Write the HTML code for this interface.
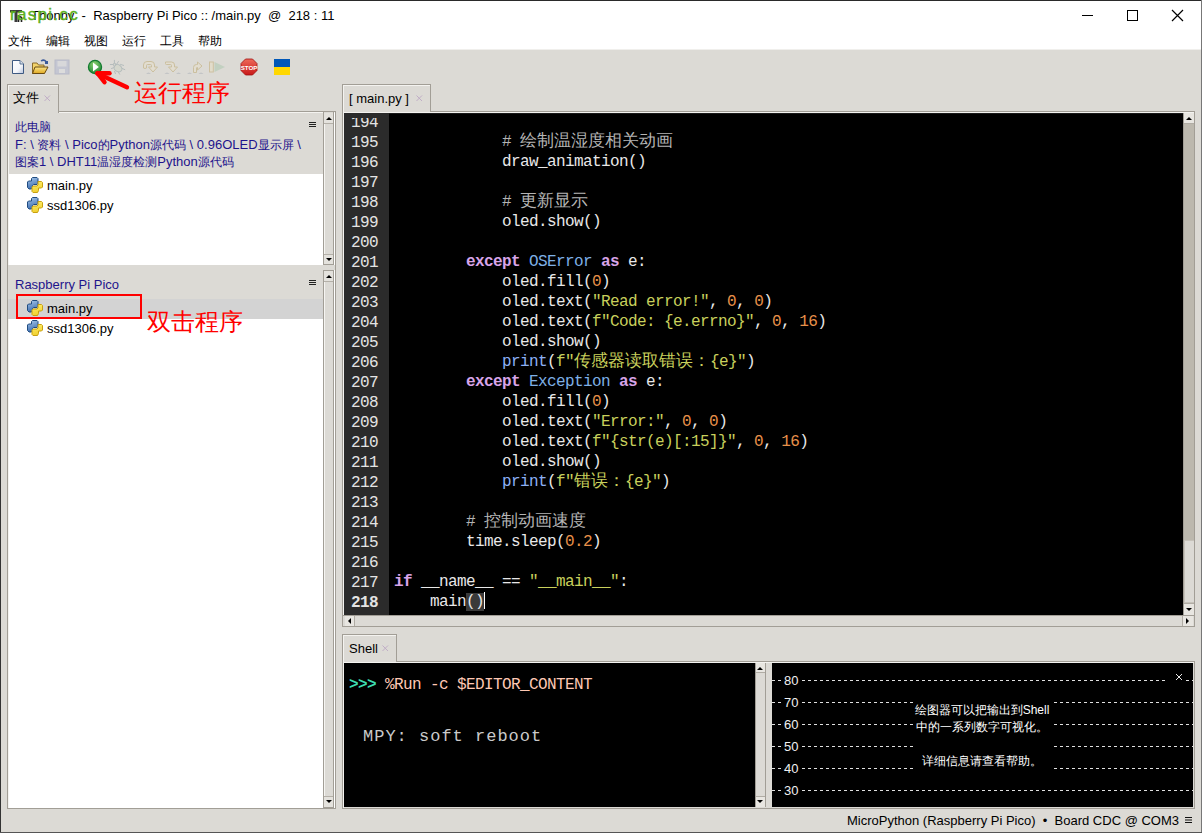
<!DOCTYPE html>
<html><head><meta charset="utf-8">
<style>
*{margin:0;padding:0;box-sizing:border-box}
html,body{width:1202px;height:833px;overflow:hidden;background:#dcdad5;font-family:"Liberation Sans",sans-serif;font-size:12px;color:#000}
.a{position:absolute}
.t{position:absolute;white-space:pre;line-height:1}
.code{font-family:"Liberation Mono",monospace;font-size:16px;letter-spacing:-0.6px;line-height:20px;white-space:pre;color:#e8e8e8}
.k{color:#d8a4e8;font-weight:bold}
.c{color:#b4b4b4}
.s{color:#c8d05c}
.n{color:#e8904a}
.cl{color:#7eb0e6}
.b{color:#8cb0f4}
.cj{font-size:17px;letter-spacing:0}
.ln{position:absolute;left:0;width:45px;font-family:"Liberation Mono",monospace;font-size:16px;letter-spacing:-0.6px;line-height:20px;white-space:pre;color:#e4e4e4;padding-left:7px}
.bd{border:1px solid #a6a39b}
.sbv{position:absolute;width:11px;background:#dcdad5;border-left:1px solid #a6a39b}
.btn{position:absolute;width:10px;height:10px;background:#e4e2dd;border:1px solid #cfccc5}
.tri-u{position:absolute;left:2px;top:3px;width:0;height:0;border-left:3px solid transparent;border-right:3px solid transparent;border-bottom:3px solid #000}
.tri-d{position:absolute;left:2px;top:3px;width:0;height:0;border-left:3px solid transparent;border-right:3px solid transparent;border-top:3px solid #000}
</style></head><body>
<!-- window frame -->
<div class="a" style="left:0;top:0;width:1202px;height:50px;background:#fff"></div>
<div class="a" style="left:0;top:0;width:1202px;height:1px;background:#2a2a2a"></div>
<div class="a" style="left:0;top:0;width:1px;height:833px;background:#333"></div>
<div class="a" style="left:1201px;top:0;width:1px;height:833px;background:#777"></div>
<div class="a" style="left:1px;top:49px;width:1200px;height:1px;background:#f0efec"></div>

<!-- title -->
<svg class="a" style="left:9px;top:8px" width="16" height="16"><path d="M1 2 H13 V4.5 H8.5 V14 H5.5 V4.5 H1 Z" fill="#3a3a3a"/><path d="M9.5 7 V14 M12.5 9 V14 M9.5 9.5 Q11 8 12.5 9.5" stroke="#222" stroke-width="1.6" fill="none"/></svg>
<div class="t" style="left:31px;top:9px;font-size:13px;color:#000">Thonny  -  Raspberry Pi Pico :: /main.py  @  218 : 11</div>
<div class="t" style="left:10px;top:6px;font-size:17px;color:#5cb01c;letter-spacing:1.3px;-webkit-text-stroke:0.4px #5cb01c">raspi.cc</div>
<!-- window controls -->
<div class="a" style="left:1082px;top:15px;width:11px;height:1px;background:#000"></div>
<div class="a" style="left:1127px;top:10px;width:11px;height:11px;border:1px solid #000"></div>
<svg class="a" style="left:1171px;top:9px" width="13" height="13"><path d="M1 1 L12 12 M12 1 L1 12" stroke="#000" stroke-width="1.2"/></svg>

<!-- menu -->
<div class="t" style="left:8px;top:35px;font-size:12px">文件</div>
<div class="t" style="left:46px;top:35px;font-size:12px">编辑</div>
<div class="t" style="left:84px;top:35px;font-size:12px">视图</div>
<div class="t" style="left:122px;top:35px;font-size:12px">运行</div>
<div class="t" style="left:160px;top:35px;font-size:12px">工具</div>
<div class="t" style="left:198px;top:35px;font-size:12px">帮助</div>


<!-- toolbar -->
<svg class="a" style="left:0;top:50px" width="300" height="50" viewBox="0 50 300 50">
 <defs>
  <linearGradient id="pg" x1="0" y1="0" x2="1" y2="1"><stop offset="0" stop-color="#fff"/><stop offset="0.6" stop-color="#f4f6fa"/><stop offset="1" stop-color="#b8c4dc"/></linearGradient>
  <linearGradient id="fg" x1="0" y1="0" x2="0" y2="1"><stop offset="0" stop-color="#fbe58a"/><stop offset="1" stop-color="#e0a820"/></linearGradient>
  <radialGradient id="gg" cx="0.45" cy="0.3" r="0.7"><stop offset="0" stop-color="#8fd070"/><stop offset="1" stop-color="#1f8a38"/></radialGradient>
  <linearGradient id="rg" x1="0" y1="0" x2="0" y2="1"><stop offset="0" stop-color="#ee6a5a"/><stop offset="1" stop-color="#c81818"/></linearGradient>
 </defs>
 <!-- new -->
 <path d="M12.5 60.5 H20 L23.5 64 V73.5 H12.5 Z" fill="url(#pg)" stroke="#3e5a82" stroke-width="1"/>
 <path d="M20 60.5 V64 H23.5" fill="#dde4f0" stroke="#3e5a82" stroke-width="0.8"/>
 <!-- open -->
 <path d="M32.5 63 H37 L38.5 65 H44 V73.5 H32.5 Z" fill="#f2d36a" stroke="#8a6a2a" stroke-width="1"/>
 <path d="M35 67 H48 L44.5 73.5 H32.5 Z" fill="url(#fg)" stroke="#6a4a10" stroke-width="1"/>
 <path d="M41 61 Q44 59 46 61.5" fill="none" stroke="#3a5a9a" stroke-width="1.5"/>
 <rect x="45" y="61" width="3" height="3" fill="#3a5a9a"/>
 <!-- save disabled -->
 <rect x="55" y="60" width="14" height="14" fill="#c4c6d2" stroke="#b8bac8"/>
 <rect x="57.5" y="61" width="9" height="5.5" fill="#d8d8da"/>
 <rect x="59" y="69" width="6" height="4" fill="#dcdcdc"/>
 <!-- run -->
 <circle cx="95" cy="67" r="6.6" fill="url(#gg)" stroke="#137a30" stroke-width="1.2"/>
 <path d="M93 62.5 L98.8 67 L93 71.5 Z" fill="#fff"/>
 <!-- debug disabled -->
 <g stroke="#b4bcbc" stroke-width="1" fill="none" stroke-linecap="round">
  <ellipse cx="118" cy="68.2" rx="4.2" ry="3.4" fill="#d4d6cc" transform="rotate(38 118 68.2)"/>
  <circle cx="114.6" cy="64.6" r="1.4" fill="#d4d6cc"/>
  <path d="M114.4 60.3 V63.2 M118.4 61.5 L116.8 64 M110.3 64.5 H113.2 M111.5 68.5 L114 67.6 M120.5 64.4 L123.6 65.4 M122 68.4 L124.8 69.6 M114.6 71.4 L115.4 73.6 M118.4 72 L119.6 74.2"/>
 </g>
 <!-- step over -->
 <g fill="#e2ddd0" stroke="#cbbf9f" stroke-width="1" stroke-linejoin="round">
  <path d="M143.5 68 V65 Q143.5 61.5 147 61.5 H151 Q154.5 61.5 154.5 65 V67 H157.5 L153 72 L148.5 67 H151.5 V65.5 Q151.5 64.5 150.5 64.5 H147.5 Q146.5 64.5 146.5 65.5 V68 Q145 69 143.5 68 Z"/>
 </g>
 <g fill="#a9afb8"><path d="M146 73.5 Q148.5 71.8 151 73.5 Z"/></g>
 <g fill="#e2ddd0" stroke="#cbbf9f" stroke-width="1" stroke-linejoin="round">
  <path d="M165.5 62 H171.5 Q174.5 62 174.5 65 V67 H177.5 L173 72 L168.5 67 H171.5 V65.5 Q171.5 64.5 170.5 64.5 H166.5 Q165.5 64.5 165.5 63.5 Z"/>
 </g>
 <g fill="#a9afb8"><path d="M164.5 73.5 Q167 71.8 169.5 73.5 Z M176 73.5 Q178.5 71.8 181 73.5 Z"/></g>
 <g fill="#e2ddd0" stroke="#cbbf9f" stroke-width="1" stroke-linejoin="round">
  <path d="M193.5 72.5 V67.5 Q193.5 64.5 196.5 64.5 H197.5 V62 L202 66 L197.5 70 V67.5 H197 Q196.5 67.5 196.5 68 V72.5 Z"/>
 </g>
 <g fill="#a9afb8"><path d="M187 73.5 Q189.5 71.8 192 73.5 Z M198.5 73.5 Q201 71.8 203.5 73.5 Z"/></g>
 <rect x="209.5" y="62" width="3.8" height="10" fill="#e2dccb" stroke="#cdc0a0" stroke-width="1"/>
 <path d="M214.5 62 L225 67 L214.5 72 Z" fill="#c2d0c0"/>
 <!-- stop -->
 <path d="M245.5 59 H252.5 L257 63.5 V70.5 L252.5 75 H245.5 L241 70.5 V63.5 Z" fill="url(#rg)" stroke="#a01010" stroke-width="0.8"/>
 <text x="249" y="69.6" font-family="Liberation Sans" font-weight="bold" font-size="6.2" fill="#fff" text-anchor="middle">STOP</text>
 <!-- flag -->
 <rect x="274" y="59" width="16" height="8" fill="#0057b8"/>
 <rect x="274" y="67" width="16" height="8" fill="#ffd700"/>
 <!-- arrow -->
 <g stroke="#ff0000" stroke-width="4.4" stroke-linecap="round" stroke-linejoin="round" fill="none">
  <path d="M97.5 73.5 L127 87.2"/>
  <path d="M97.5 73.2 L109.5 73.2"/>
  <path d="M97.5 73.2 L104.5 82.2"/>
 </g>
</svg>
<div class="t" style="left:134px;top:81px;font-size:24px;color:#ff0000">运行程序</div>

<!-- LEFT PANEL -->
<div class="a" style="left:7px;top:111px;width:329px;height:698px;border:1px solid #a29e96;background:#fff"><div class="a" style="left:0;top:0;width:327px;height:696px;border-left:1px solid #f4f3f0;border-top:1px solid #f4f3f0"></div></div><div class="a" style="left:7px;top:84px;width:52px;height:29px;background:#dcdad5;border:1px solid #a29e96;border-bottom:none"><div class="a" style="left:0;top:0;width:50px;height:28px;border-left:1px solid #f4f3f0;border-top:1px solid #f4f3f0"></div></div>
<div class="t" style="left:13px;top:92px;font-size:12.5px">文件</div>
<svg class="a" style="left:44px;top:95px" width="7" height="7"><path d="M0.5 0.5 L6 6 M6 0.5 L0.5 6" stroke="#bca8c4" stroke-width="0.9"/></svg>
<!-- upper header -->
<div class="a" style="left:9px;top:113px;width:314px;height:61px;background:#dcdad5"></div>
<div class="t" style="left:15px;top:121px;font-size:12px;color:#1e148c">此电脑</div>
<div class="t" style="left:15px;top:138px;font-size:13px;color:#1e148c">F: \ <span style="font-size:12px">资料</span> \ Pico<span style="font-size:12px">的</span>Python<span style="font-size:12px">源代码</span> \ 0.96OLED<span style="font-size:12px">显示屏</span> \</div>
<div class="t" style="left:15px;top:155px;font-size:13px;color:#1e148c"><span style="font-size:12px">图案</span>1 \ DHT11<span style="font-size:12px">温湿度检测</span>Python<span style="font-size:12px">源代码</span></div>
<svg class="a" style="left:309px;top:121px" width="8" height="7"><path d="M0 1.5H7M0 3.5H7M0 5.5H7" stroke="#222" stroke-width="1"/></svg>
<!-- upper list -->
<div class="t" style="left:47px;top:179px;font-size:13px">main.py</div>
<div class="t" style="left:47px;top:199px;font-size:13px">ssd1306.py</div>
<!-- lower header -->
<div class="a" style="left:8px;top:265px;width:315px;height:34px;background:#dcdad5"></div>
<div class="t" style="left:15px;top:278px;font-size:13px;color:#1e148c">Raspberry Pi Pico</div>
<svg class="a" style="left:309px;top:279px" width="8" height="7"><path d="M0 1.5H7M0 3.5H7M0 5.5H7" stroke="#222" stroke-width="1"/></svg>
<div class="a" style="left:8px;top:299px;width:315px;height:20px;background:#d3d3d3"></div>
<div class="a" style="left:16px;top:294px;width:126px;height:25px;border:2px solid #ff0000"></div>
<div class="t" style="left:47px;top:302px;font-size:13px">main.py</div>
<div class="t" style="left:47px;top:322px;font-size:13px">ssd1306.py</div>
<div class="t" style="left:147px;top:310px;font-size:24px;color:#ff0000">双击程序</div>
<!-- python icons -->
<svg class="a" style="left:0;top:0" width="60" height="340">
 <defs>
  <g id="py">
   <linearGradient id="pyb" x1="0" y1="0" x2="0.3" y2="1"><stop offset="0" stop-color="#a8c8ec"/><stop offset="1" stop-color="#3f6fb0"/></linearGradient>
   <linearGradient id="pyy" x1="0" y1="0" x2="0.3" y2="1"><stop offset="0" stop-color="#fff070"/><stop offset="1" stop-color="#f0d030"/></linearGradient>
   <path d="M5.5 0.5 H10 L11 1.5 V6.5 L10 7.5 H6.5 L5.5 8.5 V11 L4.5 12 H2 L0.5 10.5 V5 L1.5 4 H4.5 V1.5 Z" fill="url(#pyb)" stroke="#204c80" stroke-width="1"/>
   <path d="M11 4.5 H14.5 L15.5 5.5 V10 L14.5 11 H11.5 V13.5 L10.5 15.5 H6 L5 14.5 V10 L6 9 H10 L11 8 Z" fill="url(#pyy)" stroke="#c8a010" stroke-width="1"/>
  </g>
 </defs>
 <use href="#py" x="27" y="177"/>
 <use href="#py" x="27" y="197"/>
 <use href="#py" x="27" y="300"/>
 <use href="#py" x="27" y="320"/>
</svg>
<!-- scrollbars left -->
<div class="a" style="left:323px;top:112px;width:11px;height:153px;background:#dcdad5;border:1px solid #a29e96;border-top:none"></div>
<div class="a" style="left:8px;top:265px;width:327px;height:5px;background:#dcdad5"></div><div class="a" style="left:323px;top:270px;width:11px;height:538px;background:#dcdad5;border:1px solid #a29e96"></div>


<div class="a" style="left:324px;top:113px;width:9px;height:11px;background:#e4e2dd;border-bottom:1px solid #b4b0a8"></div>
<div class="a" style="left:326px;top:117px;width:0;height:0;border-left:3px solid transparent;border-right:3px solid transparent;border-bottom:3px solid #000"></div>
<div class="a" style="left:324px;top:124px;width:10px;height:130px;border-left:1px solid #f6f5f2"></div>
<div class="a" style="left:324px;top:254px;width:9px;height:10px;background:#e4e2dd;border-top:1px solid #b4b0a8"></div>
<div class="a" style="left:326px;top:258px;width:0;height:0;border-left:3px solid transparent;border-right:3px solid transparent;border-top:3px solid #000"></div>
<div class="a" style="left:324px;top:271px;width:9px;height:11px;background:#e4e2dd;border-bottom:1px solid #b4b0a8"></div>
<div class="a" style="left:326px;top:275px;width:0;height:0;border-left:3px solid transparent;border-right:3px solid transparent;border-bottom:3px solid #000"></div>
<div class="a" style="left:324px;top:282px;width:10px;height:514px;border-left:1px solid #f6f5f2"></div>
<div class="a" style="left:324px;top:796px;width:9px;height:11px;background:#e4e2dd;border-top:1px solid #b4b0a8"></div>
<div class="a" style="left:326px;top:800px;width:0;height:0;border-left:3px solid transparent;border-right:3px solid transparent;border-top:3px solid #000"></div>
<!-- EDITOR -->
<div class="a" style="left:342px;top:111px;width:853px;height:516px;border:1px solid #a29e96;background:#dcdad5"></div><div class="a" style="left:342px;top:84px;width:89px;height:29px;background:#dcdad5;border:1px solid #a29e96;border-bottom:none"><div class="a" style="left:0;top:0;width:87px;height:28px;border-left:1px solid #f4f3f0;border-top:1px solid #f4f3f0"></div></div>
<div class="t" style="left:349px;top:92px;font-size:13px">[ main.py ]</div>
<svg class="a" style="left:416px;top:95px" width="7" height="7"><path d="M0.5 0.5 L6 6 M6 0.5 L0.5 6" stroke="#bca8c4" stroke-width="0.9"/></svg><div class="a" style="left:343px;top:112px;width:1px;height:514px;background:#f4f3f0"></div>
<div class="a" style="left:343px;top:112px;width:851px;height:1px;background:#f4f3f0"></div><div class="a" style="left:344px;top:113px;width:839px;height:502px;background:#000"></div><div class="a" style="left:344px;top:113px;width:839px;height:1px;background:#1a1a1a"></div>
<div class="a" style="left:344px;top:113px;width:45px;height:502px;background:#2b2b2b"></div>
<div class="a" style="left:344px;top:118px;width:839px;height:497px;overflow:hidden">
 <div class="ln" style="margin-top:1px;top:-6px">194</div><div class="code a" style="left:50px;top:-6px;height:20px"></div>
<div class="ln" style="margin-top:1px;top:14px">195</div><div class="code a" style="left:50px;top:14px;height:20px">            <span class="c"># <span class="cj">绘制温湿度相关动画</span></span></div>
<div class="ln" style="margin-top:1px;top:34px">196</div><div class="code a" style="left:50px;top:34px;height:20px">            draw_animation()</div>
<div class="ln" style="margin-top:1px;top:54px">197</div><div class="code a" style="left:50px;top:54px;height:20px"></div>
<div class="ln" style="margin-top:1px;top:74px">198</div><div class="code a" style="left:50px;top:74px;height:20px">            <span class="c"># <span class="cj">更新显示</span></span></div>
<div class="ln" style="margin-top:1px;top:94px">199</div><div class="code a" style="left:50px;top:94px;height:20px">            oled.show()</div>
<div class="ln" style="margin-top:1px;top:114px">200</div><div class="code a" style="left:50px;top:114px;height:20px"></div>
<div class="ln" style="margin-top:1px;top:134px">201</div><div class="code a" style="left:50px;top:134px;height:20px">        <span class="k">except</span> <span class="cl">OSError</span> <span class="k">as</span> e:</div>
<div class="ln" style="margin-top:1px;top:154px">202</div><div class="code a" style="left:50px;top:154px;height:20px">            oled.fill(<span class="n">0</span>)</div>
<div class="ln" style="margin-top:1px;top:174px">203</div><div class="code a" style="left:50px;top:174px;height:20px">            oled.text(<span class="s">"Read error!"</span>, <span class="n">0</span>, <span class="n">0</span>)</div>
<div class="ln" style="margin-top:1px;top:194px">204</div><div class="code a" style="left:50px;top:194px;height:20px">            oled.text(<span class="s">f"Code: {e.errno}"</span>, <span class="n">0</span>, <span class="n">16</span>)</div>
<div class="ln" style="margin-top:1px;top:214px">205</div><div class="code a" style="left:50px;top:214px;height:20px">            oled.show()</div>
<div class="ln" style="margin-top:1px;top:234px">206</div><div class="code a" style="left:50px;top:234px;height:20px">            <span class="b">print</span>(<span class="s">f"<span class="cj">传感器读取错误：</span>{e}"</span>)</div>
<div class="ln" style="margin-top:1px;top:254px">207</div><div class="code a" style="left:50px;top:254px;height:20px">        <span class="k">except</span> <span class="cl">Exception</span> <span class="k">as</span> e:</div>
<div class="ln" style="margin-top:1px;top:274px">208</div><div class="code a" style="left:50px;top:274px;height:20px">            oled.fill(<span class="n">0</span>)</div>
<div class="ln" style="margin-top:1px;top:294px">209</div><div class="code a" style="left:50px;top:294px;height:20px">            oled.text(<span class="s">"Error:"</span>, <span class="n">0</span>, <span class="n">0</span>)</div>
<div class="ln" style="margin-top:1px;top:314px">210</div><div class="code a" style="left:50px;top:314px;height:20px">            oled.text(<span class="s">f"{str(e)[:15]}"</span>, <span class="n">0</span>, <span class="n">16</span>)</div>
<div class="ln" style="margin-top:1px;top:334px">211</div><div class="code a" style="left:50px;top:334px;height:20px">            oled.show()</div>
<div class="ln" style="margin-top:1px;top:354px">212</div><div class="code a" style="left:50px;top:354px;height:20px">            <span class="b">print</span>(<span class="s">f"<span class="cj">错误：</span>{e}"</span>)</div>
<div class="ln" style="margin-top:1px;top:374px">213</div><div class="code a" style="left:50px;top:374px;height:20px"></div>
<div class="ln" style="margin-top:1px;top:394px">214</div><div class="code a" style="left:50px;top:394px;height:20px">        <span class="c"># <span class="cj">控制动画速度</span></span></div>
<div class="ln" style="margin-top:1px;top:414px">215</div><div class="code a" style="left:50px;top:414px;height:20px">        time.sleep(<span class="n">0.2</span>)</div>
<div class="ln" style="margin-top:1px;top:434px">216</div><div class="code a" style="left:50px;top:434px;height:20px"></div>
<div class="ln" style="margin-top:1px;top:454px">217</div><div class="code a" style="left:50px;top:454px;height:20px"><span class="k">if</span> __name__ == <span class="s">"__main__"</span>:</div>
<div class="ln" style="margin-top:1px;top:474px"><b>218</b></div><div class="code a" style="left:50px;top:474px;height:20px">    main<span style="background:#3a3a3a">()</span><span style="display:inline-block;width:1px;height:17px;background:#fff;vertical-align:-3px"></span></div>
</div>
<!-- editor v scrollbar -->
<div class="a" style="left:1183px;top:113px;width:11px;height:502px;background:#bcb8ae;border-left:1px solid #a29e96"></div>
<div class="a" style="left:1184px;top:113px;width:10px;height:11px;background:#e8e6e1;border-bottom:1px solid #b0aca4"></div>
<div class="a" style="left:1186px;top:117px;width:0;height:0;border-left:3px solid transparent;border-right:3px solid transparent;border-bottom:3px solid #000"></div>
<div class="a" style="left:1184px;top:540px;width:10px;height:63px;background:#dcdad5;border:1px solid #c6c2ba;border-right:none"></div>
<div class="a" style="left:1184px;top:603px;width:10px;height:12px;background:#e8e6e1;border-top:1px solid #b0aca4"></div>
<div class="a" style="left:1186px;top:608px;width:0;height:0;border-left:3px solid transparent;border-right:3px solid transparent;border-top:3px solid #000"></div>
<!-- editor h scrollbar -->
<div class="a" style="left:343px;top:615px;width:851px;height:11px;background:#dcdad5;border-top:1px solid #a29e96"></div>
<div class="a" style="left:345px;top:616px;width:10px;height:10px;background:#e8e6e1;border-right:1px solid #b0aca4"></div>
<div class="a" style="left:348px;top:618px;width:0;height:0;border-top:3px solid transparent;border-bottom:3px solid transparent;border-right:3px solid #000"></div>
<div class="a" style="left:1182px;top:616px;width:11px;height:10px;background:#e8e6e1;border-left:1px solid #b0aca4"></div>
<div class="a" style="left:1186px;top:618px;width:0;height:0;border-top:3px solid transparent;border-bottom:3px solid transparent;border-left:3px solid #000"></div>

<!-- SHELL -->
<div class="a" style="left:342px;top:661px;width:853px;height:148px;border:1px solid #a29e96;background:#dcdad5"></div><div class="a" style="left:342px;top:634px;width:55px;height:29px;background:#dcdad5;border:1px solid #a29e96;border-bottom:none"><div class="a" style="left:0;top:0;width:53px;height:28px;border-left:1px solid #f4f3f0;border-top:1px solid #f4f3f0"></div></div>
<div class="t" style="left:349px;top:642px;font-size:13px">Shell</div>
<svg class="a" style="left:382px;top:645px" width="7" height="7"><path d="M0.5 0.5 L6 6 M6 0.5 L0.5 6" stroke="#bca8c4" stroke-width="0.9"/></svg><div class="a" style="left:343px;top:662px;width:1px;height:146px;background:#f4f3f0"></div>
<div class="a" style="left:343px;top:662px;width:851px;height:1px;background:#f4f3f0"></div><div class="a" style="left:344px;top:663px;width:411px;height:144px;background:#000"></div>
<div class="t mono" style="left:349px;top:677px;font-family:'Liberation Mono';font-size:16px;letter-spacing:-0.6px;color:#3ddcb0"><b>&gt;&gt;&gt;</b> <span style="color:#ffc8b4">%Run -c $EDITOR_CONTENT</span></div>
<div class="t" style="left:363px;top:728px;font-family:'Liberation Mono';font-size:17px;letter-spacing:1px;color:#cacaca">MPY: soft reboot</div>
<!-- shell scrollbar -->
<div class="a" style="left:755px;top:663px;width:11px;height:144px;background:#dcdad5;border-left:1px solid #a29e96;border-right:1px solid #a29e96"></div>
<div class="a" style="left:756px;top:663px;width:9px;height:10px;background:#e8e6e1;border-bottom:1px solid #b0aca4"></div>
<div class="a" style="left:757px;top:667px;width:0;height:0;border-left:3px solid transparent;border-right:3px solid transparent;border-bottom:3px solid #000"></div>
<div class="a" style="left:756px;top:796px;width:9px;height:11px;background:#e8e6e1;border-top:1px solid #b0aca4"></div>
<div class="a" style="left:757px;top:800px;width:0;height:0;border-left:3px solid transparent;border-right:3px solid transparent;border-top:3px solid #000"></div>
<!-- PLOTTER -->
<div class="a" style="left:772px;top:663px;width:421px;height:144px;background:#000"></div>
<svg class="a" style="left:0;top:0" width="1202" height="833">
<path d="M772 680.5 H782" stroke="#e0e0e0" stroke-width="1" stroke-dasharray="3 3"/>
<path d="M802 680.5 H1193" stroke="#e0e0e0" stroke-width="1" stroke-dasharray="3 3"/>
<text x="784" y="685" font-family="Liberation Sans" font-size="13" fill="#f0f0f0">80</text>
<path d="M772 702.5 H782" stroke="#e0e0e0" stroke-width="1" stroke-dasharray="3 3"/>
<path d="M802 702.5 H1193" stroke="#e0e0e0" stroke-width="1" stroke-dasharray="3 3"/>
<text x="784" y="707" font-family="Liberation Sans" font-size="13" fill="#f0f0f0">70</text>
<path d="M772 724.5 H782" stroke="#e0e0e0" stroke-width="1" stroke-dasharray="3 3"/>
<path d="M802 724.5 H1193" stroke="#e0e0e0" stroke-width="1" stroke-dasharray="3 3"/>
<text x="784" y="729" font-family="Liberation Sans" font-size="13" fill="#f0f0f0">60</text>
<path d="M772 746.5 H782" stroke="#e0e0e0" stroke-width="1" stroke-dasharray="3 3"/>
<path d="M802 746.5 H1193" stroke="#e0e0e0" stroke-width="1" stroke-dasharray="3 3"/>
<text x="784" y="751" font-family="Liberation Sans" font-size="13" fill="#f0f0f0">50</text>
<path d="M772 768.5 H782" stroke="#e0e0e0" stroke-width="1" stroke-dasharray="3 3"/>
<path d="M802 768.5 H1193" stroke="#e0e0e0" stroke-width="1" stroke-dasharray="3 3"/>
<text x="784" y="773" font-family="Liberation Sans" font-size="13" fill="#f0f0f0">40</text>
<path d="M772 790.5 H782" stroke="#e0e0e0" stroke-width="1" stroke-dasharray="3 3"/>
<path d="M802 790.5 H1193" stroke="#e0e0e0" stroke-width="1" stroke-dasharray="3 3"/>
<text x="784" y="795" font-family="Liberation Sans" font-size="13" fill="#f0f0f0">30</text>
<rect x="913" y="692" width="138" height="82" fill="#000"/>
<rect x="1166" y="667" width="20" height="20" fill="#000"/><path d="M1176 674 L1182 680 M1182 674 L1176 680" stroke="#e8e8e8" stroke-width="1"/>
</svg>
<div class="t" style="left:913px;top:702px;width:138px;text-align:center;font-size:12px;color:#fff;line-height:17px">绘图器可以把输出到Shell<br>中的一系列数字可视化。<br><br>详细信息请查看帮助。</div>
<!-- STATUS -->
<div class="t" style="left:847px;top:814px;font-size:13px;color:#000">MicroPython (Raspberry Pi Pico)  •  Board CDC @ COM3</div>
<svg class="a" style="left:1185px;top:816px" width="8" height="8"><path d="M0 1.5H7M0 4H7M0 6.5H7" stroke="#111" stroke-width="1.2"/></svg>
<div class="a" style="left:0;top:832px;width:1202px;height:1px;background:#555"></div>
</body></html>
